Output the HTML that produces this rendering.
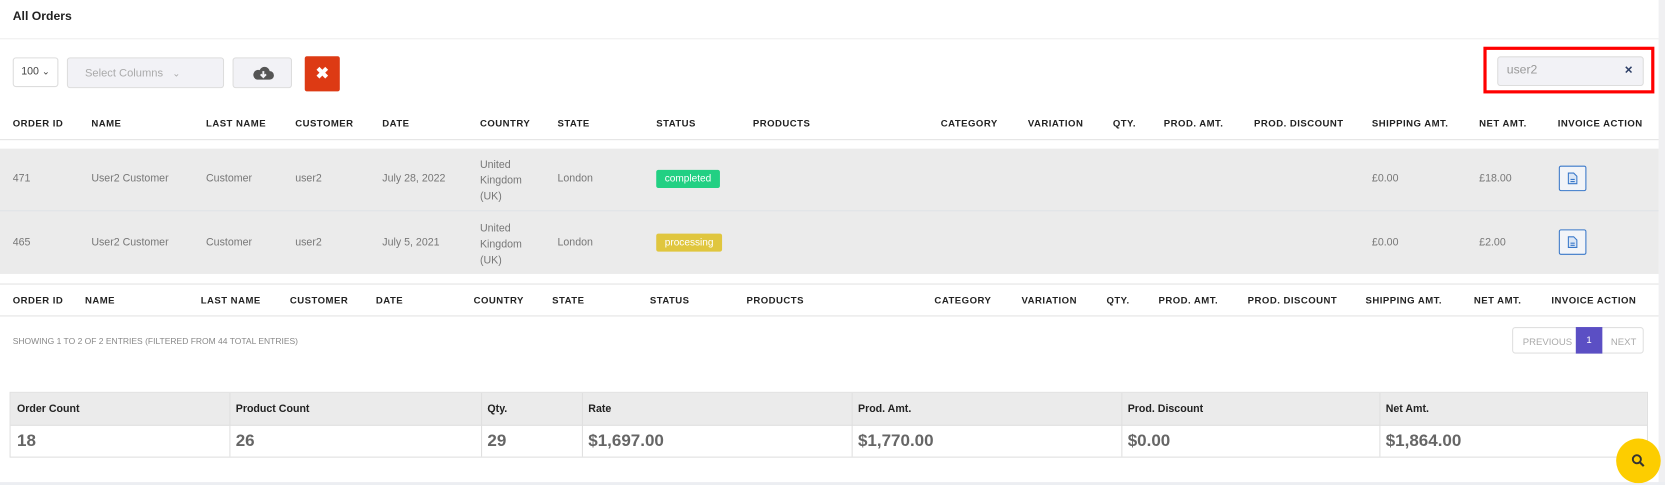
<!DOCTYPE html>
<html><head><meta charset="utf-8"><style>
*{box-sizing:border-box;margin:0;padding:0}
html,body{width:1665px;height:485px;overflow:hidden;background:#fff}
#w{position:absolute;left:0;top:0;width:1568px;height:457px;transform:scale(1.06186);transform-origin:0 0;font-family:"Liberation Sans",Arial,sans-serif;color:#666}
.a{position:absolute;white-space:nowrap}
.h{font-size:9px;font-weight:bold;color:#222;letter-spacing:.45px}
.c{font-size:10px;color:#777}
.line{position:absolute;height:1px;background:#e3e3e3}
.badge{position:absolute;height:17px;border-radius:2px;color:#fff;font-size:9.5px;line-height:17px;padding:0 8px}
.inv{position:absolute;width:26px;height:24px;border:1px solid #3a78c9;border-radius:2px;background:#f2f4f8}
.sum{position:absolute;left:9px;top:369px;width:1543px;height:62px;border:1px solid #e0e0e0}
.sum .row1{position:absolute;left:0;top:0;width:100%;height:31px;background:#ebebeb;border-bottom:1px solid #e0e0e0}
.sum .v{position:absolute;top:0;bottom:0;width:1px;background:#e0e0e0}
.sl{font-size:10px;font-weight:bold;color:#222;top:10px}
.sv{font-size:16px;font-weight:bold;color:#666;top:37px}
</style></head><body><div id="w">
<div class="a" style="left:12px;top:10px;font-size:11.5px;font-weight:bold;color:#222">All Orders</div>
<div class="line" style="left:0;top:36px;width:1562px;background:#eee"></div>
<div class="a" style="left:1562px;top:0;width:6px;height:457px;background:#f0f0f2"></div>

<div class="a" style="left:12px;top:54px;width:43px;height:28px;border:1px solid #ddd;border-radius:3px;font-size:10px;color:#444;padding:7px 0 0 7px">100 <span style="font-size:9px">&#8964;</span></div>
<div class="a" style="left:63px;top:54px;width:148px;height:29px;border:1px solid #ddd;border-radius:3px;background:#f2f2f6;font-size:10.5px;color:#aaa;padding:8px 0 0 16px">Select Columns &nbsp;&nbsp;<span style="font-size:9px">&#8964;</span></div>
<div class="a" style="left:219px;top:54px;width:56px;height:29px;border:1px solid #ddd;border-radius:3px;background:#f2f2f6">
<svg width="20" height="14" viewBox="0 0 20 14" style="position:absolute;left:18px;top:7px"><path d="M4 13h12a4 4 0 0 0 0-8 5 5 0 0 0-9.5-1A4.5 4.5 0 0 0 4 13z" fill="#555"/><path d="M10 5v5M7.5 8l2.5 2.5 2.5-2.5" stroke="#f2f2f6" stroke-width="1.8" fill="none"/></svg></div>
<div class="a" style="left:287px;top:53px;width:33px;height:33px;border-radius:2px;background:#dd3a14;color:#fff;font-size:15px;font-weight:bold;text-align:center;line-height:33px">&#10006;</div>

<div class="a" style="left:1397px;top:44px;width:161px;height:44px;border:3px solid #f00"></div>
<div class="a" style="left:1410px;top:53px;width:138px;height:28px;border:1px solid #ddd;border-radius:3px;background:#f2f2f6;font-size:11.5px;color:#999;padding:6px 0 0 8px">user2<span style="position:absolute;right:9px;top:7px;color:#2c3e66;font-weight:bold;font-size:10px">&#10005;</span></div>

<div class="a h" style="top:111px;left:12px">ORDER ID</div><div class="a h" style="top:111px;left:86px">NAME</div><div class="a h" style="top:111px;left:194px">LAST NAME</div><div class="a h" style="top:111px;left:278px">CUSTOMER</div><div class="a h" style="top:111px;left:360px">DATE</div><div class="a h" style="top:111px;left:452px">COUNTRY</div><div class="a h" style="top:111px;left:525px">STATE</div><div class="a h" style="top:111px;left:618px">STATUS</div><div class="a h" style="top:111px;left:709px">PRODUCTS</div><div class="a h" style="top:111px;left:886px">CATEGORY</div><div class="a h" style="top:111px;left:968px">VARIATION</div><div class="a h" style="top:111px;left:1048px">QTY.</div><div class="a h" style="top:111px;left:1096px">PROD. AMT.</div><div class="a h" style="top:111px;left:1181px">PROD. DISCOUNT</div><div class="a h" style="top:111px;left:1292px">SHIPPING AMT.</div><div class="a h" style="top:111px;left:1393px">NET AMT.</div><div class="a h" style="top:111px;left:1467px">INVOICE ACTION</div>
<div class="line" style="left:0;top:131px;width:1562px"></div>

<div class="a" style="left:0;top:140px;width:1562px;height:118px;background:#ebebeb"></div>
<div class="line" style="left:0;top:198px;width:1562px;background:#dfe3e8"></div>

<div class="a c" style="left:12px;top:163px">471</div><div class="a c" style="left:86px;top:163px">User2 Customer</div><div class="a c" style="left:194px;top:163px">Customer</div><div class="a c" style="left:278px;top:163px">user2</div><div class="a c" style="left:360px;top:163px">July 28, 2022</div><div class="a c" style="left:452px;top:148px;line-height:15px">United<br>Kingdom<br>(UK)</div><div class="a c" style="left:525px;top:163px">London</div>
<div class="badge" style="left:618px;top:160px;background:#22d083">completed</div>
<div class="a c" style="left:1292px;top:163px">£0.00</div><div class="a c" style="left:1393px;top:163px">£18.00</div>
<div class="inv" style="left:1468px;top:156px"></div>

<div class="a c" style="left:12px;top:223px">465</div><div class="a c" style="left:86px;top:223px">User2 Customer</div><div class="a c" style="left:194px;top:223px">Customer</div><div class="a c" style="left:278px;top:223px">user2</div><div class="a c" style="left:360px;top:223px">July 5, 2021</div><div class="a c" style="left:452px;top:208px;line-height:15px">United<br>Kingdom<br>(UK)</div><div class="a c" style="left:525px;top:223px">London</div>
<div class="badge" style="left:618px;top:220px;background:#e0c63e">processing</div>
<div class="a c" style="left:1292px;top:223px">£0.00</div><div class="a c" style="left:1393px;top:223px">£2.00</div>
<div class="inv" style="left:1468px;top:216px"></div>

<svg class="a" style="left:1476px;top:162px" width="10" height="12" viewBox="0 0 10 12"><path d="M1 1h5l3 3v7H1z" fill="#dbe6f5" stroke="#3a78c9"/><path d="M3 7h4M3 9h4" stroke="#3a78c9"/></svg>
<svg class="a" style="left:1476px;top:222px" width="10" height="12" viewBox="0 0 10 12"><path d="M1 1h5l3 3v7H1z" fill="#dbe6f5" stroke="#3a78c9"/><path d="M3 7h4M3 9h4" stroke="#3a78c9"/></svg>

<div class="line" style="left:0;top:267px;width:1562px"></div>
<div class="a h" style="top:278px;left:12px">ORDER ID</div><div class="a h" style="top:278px;left:80px">NAME</div><div class="a h" style="top:278px;left:189px">LAST NAME</div><div class="a h" style="top:278px;left:273px">CUSTOMER</div><div class="a h" style="top:278px;left:354px">DATE</div><div class="a h" style="top:278px;left:446px">COUNTRY</div><div class="a h" style="top:278px;left:520px">STATE</div><div class="a h" style="top:278px;left:612px">STATUS</div><div class="a h" style="top:278px;left:703px">PRODUCTS</div><div class="a h" style="top:278px;left:880px">CATEGORY</div><div class="a h" style="top:278px;left:962px">VARIATION</div><div class="a h" style="top:278px;left:1042px">QTY.</div><div class="a h" style="top:278px;left:1091px">PROD. AMT.</div><div class="a h" style="top:278px;left:1175px">PROD. DISCOUNT</div><div class="a h" style="top:278px;left:1286px">SHIPPING AMT.</div><div class="a h" style="top:278px;left:1388px">NET AMT.</div><div class="a h" style="top:278px;left:1461px">INVOICE ACTION</div>
<div class="line" style="left:0;top:297px;width:1562px"></div>

<div class="a" style="left:12px;top:317px;font-size:8px;color:#888">SHOWING 1 TO 2 OF 2 ENTRIES (FILTERED FROM 44 TOTAL ENTRIES)</div>
<div class="a" style="left:1424px;top:308px;width:124px;height:25px;border:1px solid #e0e0e0;border-radius:3px;font-size:9px;color:#aaa">
<span style="position:absolute;left:9px;top:8px">PREVIOUS</span>
<span style="position:absolute;left:59px;top:-1px;width:25px;height:25px;background:#5b4fc4;color:#fff;text-align:center;line-height:25px">1</span>
<span style="position:absolute;left:92px;top:8px">NEXT</span></div>

<div class="sum"><div class="row1"></div>
<div class="v" style="left:206px"></div><div class="v" style="left:443px"></div><div class="v" style="left:538px"></div><div class="v" style="left:792px"></div><div class="v" style="left:1046px"></div><div class="v" style="left:1289px"></div>
<div class="a sl" style="left:6px">Order Count</div><div class="a sl" style="left:212px">Product Count</div><div class="a sl" style="left:449px">Qty.</div><div class="a sl" style="left:544px">Rate</div><div class="a sl" style="left:798px">Prod. Amt.</div><div class="a sl" style="left:1052px">Prod. Discount</div><div class="a sl" style="left:1295px">Net Amt.</div>
<div class="a sv" style="left:6px">18</div><div class="a sv" style="left:212px">26</div><div class="a sv" style="left:449px">29</div><div class="a sv" style="left:544px">$1,697.00</div><div class="a sv" style="left:798px">$1,770.00</div><div class="a sv" style="left:1052px">$0.00</div><div class="a sv" style="left:1295px">$1,864.00</div>
</div>
<div class="line" style="left:0;top:454px;width:1568px;background:#eceef2;height:3px"></div>

<div class="a" style="left:1522px;top:413px;width:42px;height:42px;border-radius:50%;background:#fdcd00">
<svg width="14" height="14" viewBox="0 0 14 14" style="position:absolute;left:14px;top:14px"><circle cx="5.5" cy="5.5" r="3.8" stroke="#333" stroke-width="1.8" fill="none"/><path d="M8.5 8.5l3.5 3.5" stroke="#333" stroke-width="2"/></svg></div>
</div></body></html>
